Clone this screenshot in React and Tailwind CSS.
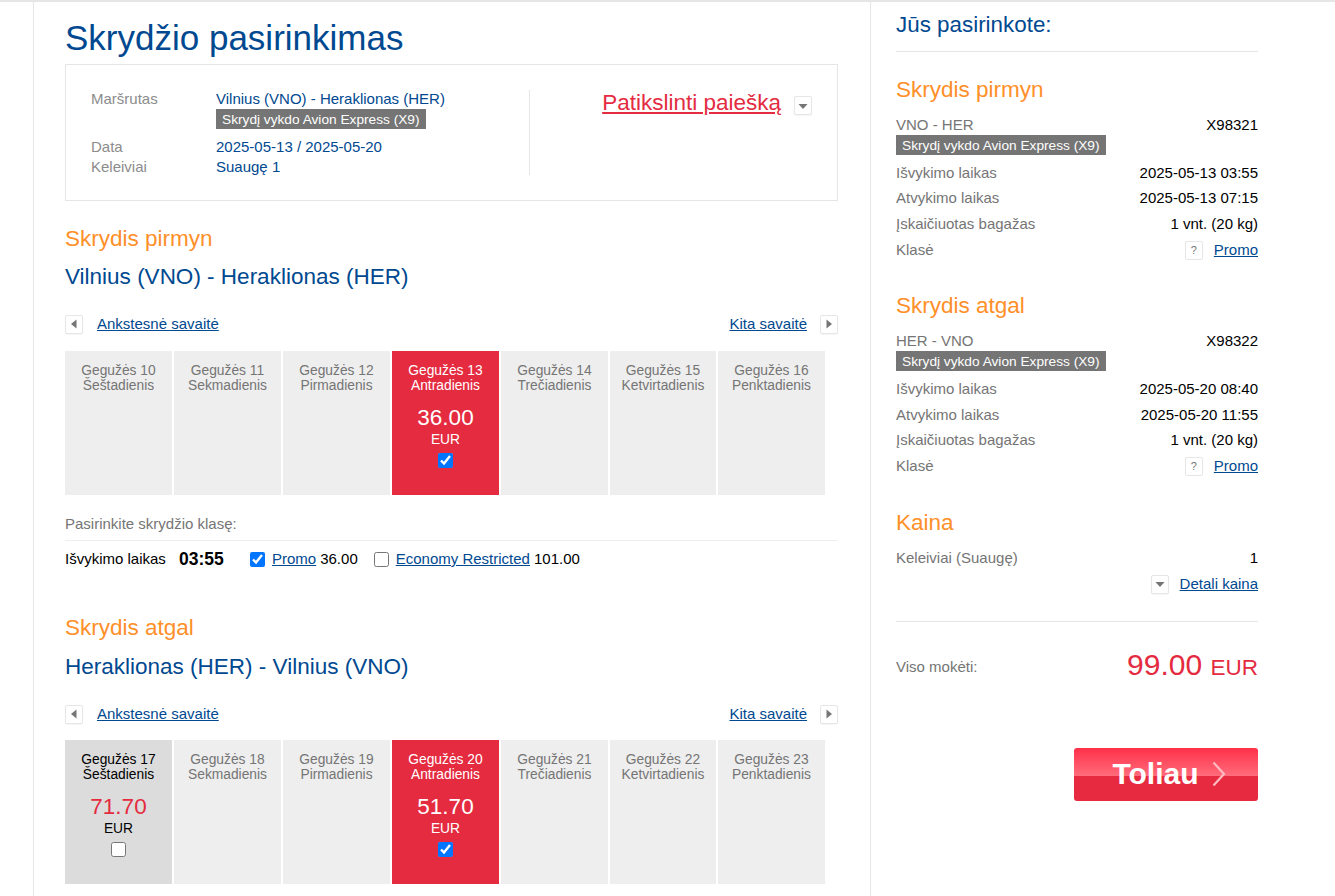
const weekdays = ["Šeštadienis", "Sekmadienis", "Pirmadienis", "Antradienis", "Trečiadienis", "Ketvirtadienis", "Penktadienis"];

function ArrowBox({ dir, className = "" }) {
  const points = {
    down: "3.5,6 12.5,6 8,11",
    left: "10.5,3.5 10.5,12.5 5,8",
    right: "5.5,3.5 5.5,12.5 11,8",
  };
  return (
    <span className={`inline-flex w-[18px] h-[19px] shrink-0 items-center justify-center border border-[#e6e6e6] rounded-[2px] bg-white shadow-[0_1px_1px_rgba(0,0,0,0.04)] ${className}`}>
      <svg width="16" height="16" viewBox="0 0 16 16">
        <polygon points={points[dir]} fill="#757575" />
      </svg>
    </span>
  );
}

function Badge() {
  return (
    <div className="w-fit h-5 px-[6px] bg-[#757575] text-white text-[13.7px] leading-[21px] whitespace-nowrap">
      Skrydį vykdo Avion Express (X9)
    </div>
  );
}

function DayCell({ day, weekday, price, selected, available }) {
  const bg = selected ? "bg-[#e42b3f]" : available ? "bg-[#dcdcdc]" : "bg-[#eeeeee]";
  const head = selected ? "text-white" : available ? "text-black" : "text-[#757575]";
  return (
    <div className={`h-[144px] pt-[12px] text-center ${bg}`}>
      <div className={`text-[13.8px] leading-[15px] ${head}`}>
        <div>Gegužės {day}</div>
        <div>{weekday}</div>
      </div>
      {price && (
        <div className="mt-[11px]">
          <div className={`text-[22.5px] leading-[27px] ${selected ? "text-white" : "text-[#e42b3f]"}`}>{price}</div>
          <div className={`text-[13.8px] leading-[16px] mt-[1px] ${selected ? "text-white" : "text-black"}`}>EUR</div>
          <input type="checkbox" readOnly checked={!!selected} className="block mx-auto mt-[5px] w-[15px] h-[15px] [appearance:auto] accent-[#0075ff]" />
        </div>
      )}
    </div>
  );
}

function Week({ start, selected, extra }) {
  return (
    <div className="grid grid-cols-[107px_107px_107px_107px_107px_106px_107px] gap-x-[2px] w-[760px]">
      {weekdays.map((w, i) => {
        const day = start + i;
        const cell = day === selected.day ? selected : extra && day === extra.day ? extra : null;
        return (
          <DayCell
            key={w}
            day={day}
            weekday={w}
            price={cell?.price}
            selected={day === selected.day}
            available={!!cell}
          />
        );
      })}
    </div>
  );
}

function WeekNav() {
  return (
    <div className="flex items-center justify-between h-[20px] text-[15px]">
      <div className="flex items-center gap-[14px]">
        <ArrowBox dir="left" />
        <a className="text-[#004990] underline">Ankstesnė savaitė</a>
      </div>
      <div className="flex items-center gap-[13px]">
        <a className="text-[#004990] underline">Kita savaitė</a>
        <ArrowBox dir="right" />
      </div>
    </div>
  );
}

function Row({ label, children }) {
  return (
    <div className="flex justify-between items-center h-[25.75px] text-[15px]">
      <span className="text-[#757575]">{label}</span>
      <span className="text-black flex items-center">{children}</span>
    </div>
  );
}

function SideFlight({ title, route, code, dep, arr }) {
  return (
    <div>
      <h3 className="text-[22.5px] leading-[28px] text-[#ff8f28]">{title}</h3>
      <div className="mt-[10.6px] flex justify-between h-[20px] text-[15px] leading-[20px]">
        <span className="text-[#757575]">{route}</span>
        <span className="text-black">{code}</span>
      </div>
      <Badge />
      <div className="mt-[5.5px]">
        <Row label="Išvykimo laikas">{dep}</Row>
        <Row label="Atvykimo laikas">{arr}</Row>
        <Row label="Įskaičiuotas bagažas">1 vnt. (20 kg)</Row>
        <Row label="Klasė">
          <span className="w-[18px] h-[19px] mr-[11px] flex items-center justify-center border border-[#e6e6e6] rounded-[2px] text-[11px] text-[#757575]">?</span>
          <a className="text-[#004990] underline">Promo</a>
        </Row>
      </div>
    </div>
  );
}

export default function App() {
  return (
    <div className="h-[896px] w-[1335px] overflow-hidden bg-white border-t-2 border-[#e6e6e6] font-['Liberation_Sans',Arial,sans-serif]">
      <div className="ml-[33px] w-[838px] h-full flex border-x border-[#e6e6e6] box-border">
        <main className="ml-[31px] w-[773px] shrink-0">
          <h1 className="mt-[14px] text-[35px] leading-[44px] text-[#004990]">Skrydžio pasirinkimas</h1>

          <section className="mt-[4px] h-[137px] border border-[#e6e6e6] flex pt-[25px] pl-[25px]">
            <div className="w-[439px] text-[15px] border-r border-[#e6e6e6] h-[85px]">
              <div className="flex -mt-[1px]">
                <span className="w-[125px] text-[#8c8c8c] leading-[20px]">Maršrutas</span>
                <div>
                  <div className="text-[#004990] leading-[20px]">Vilnius (VNO) - Heraklionas (HER)</div>
                  <Badge />
                </div>
              </div>
              <div className="flex mt-[8px] leading-[20px]">
                <span className="w-[125px] text-[#8c8c8c]">Data</span>
                <span className="text-[#004990]">2025-05-13 / 2025-05-20</span>
              </div>
              <div className="flex leading-[20px]">
                <span className="w-[125px] text-[#8c8c8c]">Keleiviai</span>
                <span className="text-[#004990]">Suaugę 1</span>
              </div>
            </div>
            <div className="flex-1 flex justify-end items-start pr-[25px] pt-[5px]">
              <a className="text-[22.5px] leading-[28px] text-[#e42b3f] underline -mt-[6px]">Patikslinti paiešką</a>
              <ArrowBox dir="down" className="ml-[13px] mt-[1px]" />
            </div>
          </section>

          <h2 className="mt-[24px] text-[22.5px] leading-[28px] text-[#ff8f28]">Skrydis pirmyn</h2>
          <h2 className="mt-[10px] text-[22.5px] leading-[28px] text-[#004990]">Vilnius (VNO) - Heraklionas (HER)</h2>
          <div className="mt-[23px]"><WeekNav /></div>
          <div className="mt-[17px]"><Week start={10} selected={{ day: 13, price: "36.00" }} /></div>

          <div className="mt-[19px] text-[15px] leading-[20px] text-[#757575] pb-[6px] border-b border-[#eeeeee]">Pasirinkite skrydžio klasę:</div>
          <div className="mt-[8px] flex items-center h-[20px] text-[15px] text-black">
            <span className="w-[114px]">Išvykimo laikas</span>
            <span className="w-[71px] text-[17.5px] font-bold">03:55</span>
            <input type="checkbox" readOnly checked className="w-[15px] h-[15px] [appearance:auto] accent-[#0075ff]" />
            <a className="ml-[7px] text-[#004990] underline">Promo</a>
            <span className="ml-[4px]">36.00</span>
            <input type="checkbox" readOnly checked={false} className="ml-[16px] w-[15px] h-[15px] [appearance:auto] accent-[#0075ff]" />
            <a className="ml-[7px] text-[#004990] underline">Economy Restricted</a>
            <span className="ml-[4px]">101.00</span>
          </div>

          <h2 className="mt-[45px] text-[22.5px] leading-[28px] text-[#ff8f28]">Skrydis atgal</h2>
          <h2 className="mt-[11px] text-[22.5px] leading-[28px] text-[#004990]">Heraklionas (HER) - Vilnius (VNO)</h2>
          <div className="mt-[23px]"><WeekNav /></div>
          <div className="mt-[16.4px]"><Week start={17} selected={{ day: 20, price: "51.70" }} extra={{ day: 17, price: "71.70" }} /></div>
        </main>

        <aside className="ml-[58px] w-[362px] shrink-0">
          <h2 className="mt-[9px] text-[22.4px] leading-[28px] text-[#004990] pb-[12px] border-b border-[#e6e6e6]">Jūs pasirinkote:</h2>
          <div className="mt-[24px]">
            <SideFlight title="Skrydis pirmyn" route="VNO - HER" code="X98321" dep="2025-05-13 03:55" arr="2025-05-13 07:15" />
          </div>
          <div className="mt-[29px]">
            <SideFlight title="Skrydis atgal" route="HER - VNO" code="X98322" dep="2025-05-20 08:40" arr="2025-05-20 11:55" />
          </div>
          <h3 className="mt-[29.5px] text-[22.5px] leading-[28px] text-[#ff8f28]">Kaina</h3>
          <div className="mt-[9px]">
            <Row label="Keleiviai (Suaugę)">1</Row>
            <div className="flex justify-end items-center h-[26px] text-[15px]">
              <ArrowBox dir="down" className="mr-[11px]" />
              <a className="text-[#004990] underline">Detali kaina</a>
            </div>
          </div>
          <div className="mt-[24px] border-t border-[#e6e6e6] pt-[22px] flex justify-between items-center h-[68px]">
            <span className="text-[15px] text-[#757575] mt-[1px]">Viso mokėti:</span>
            <span className="text-[#e42b3f] text-[30px] leading-[44px] -mt-[1px]">99.00 <span className="text-[22.5px]">EUR</span></span>
          </div>
          <div className="mt-[59px] flex justify-end">
            <button className="w-[184px] h-[53px] pl-[6px] pb-[2px] rounded-[3px] bg-[linear-gradient(to_bottom,#ff3048_0%,#ff6c7c_53%,#e72a3f_53%,#e72a3f_100%)] text-white font-bold text-[30px] flex items-center justify-center">
              Toliau
              <svg className="ml-[13px]" width="14" height="26" viewBox="0 0 14 26" fill="none">
                <path d="M1.5 1.5L12 13 1.5 24.5" stroke="#ffb9c1" strokeWidth="2.2" />
              </svg>
            </button>
          </div>
        </aside>
      </div>
    </div>
  );
}
